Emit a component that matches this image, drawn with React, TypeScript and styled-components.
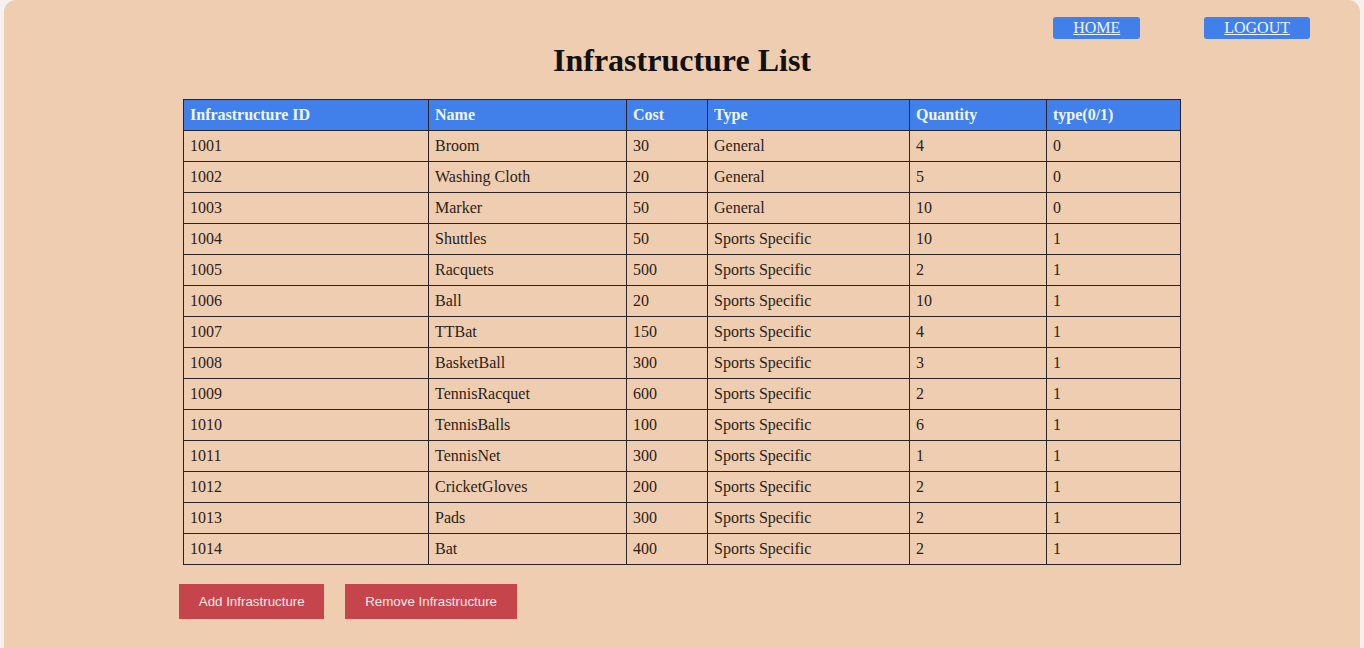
import React from 'react';
import styled, { createGlobalStyle } from 'styled-components';

const GlobalStyle = createGlobalStyle`
  html, body {
    margin: 0;
    padding: 0;
    background: #f6f1ee;
    overflow: hidden;
  }
  body {
    font-family: "Liberation Serif", "Times New Roman", serif;
  }
`;

const Panel = styled.div`
  margin: 0 4px;
  min-height: 670px;
  background-color: #efcdb0;
  border-radius: 12px;
  padding-top: 17px;
  box-sizing: border-box;
`;

const Nav = styled.nav`
  display: flex;
  justify-content: flex-end;
  gap: 64px;
  padding-right: 50px;
`;

const NavLink = styled.a`
  display: block;
  padding: 2px 20px;
  line-height: 18px;
  font-size: 16px;
  color: #eef4ff;
  text-decoration: underline;
  background-color: #4180ea;
  border-radius: 3px;
  cursor: pointer;
`;

const Title = styled.h1`
  margin: 3px 0 21px;
  font-size: 32px;
  line-height: 36px;
  font-weight: 700;
  text-align: center;
  color: #111;
`;

const Content = styled.div`
  width: 998px;
  margin: 0 auto;
`;

const Table = styled.table`
  width: 998px;
  table-layout: fixed;
  border-collapse: collapse;
  font-size: 16px;
`;

const Th = styled.th`
  background-color: #4180ea;
  color: #f1f6ff;
  text-align: left;
  font-weight: 700;
  padding: 6px;
  line-height: 18px;
  border: 1px solid #2a2326;
`;

const Td = styled.td`
  color: #2b1d18;
  padding: 6px;
  line-height: 18px;
  border: 1px solid #2a2326;
`;

const Actions = styled.div`
  display: flex;
  gap: 21px;
  margin: 19px 0 0 -4px;
`;

const ActionButton = styled.button`
  background-color: #c6454d;
  color: #f7e9e9;
  border: none;
  padding: 10px 19.75px;
  line-height: 15px;
  font-size: 13.333px;
  font-family: "Liberation Sans", Arial, sans-serif;
  cursor: pointer;
`;

interface Item {
  id: number;
  name: string;
  cost: number;
  type: string;
  quantity: number;
  flag: number;
}

const columns = [
  { label: 'Infrastructure ID', width: 245 },
  { label: 'Name', width: 198 },
  { label: 'Cost', width: 81 },
  { label: 'Type', width: 202 },
  { label: 'Quantity', width: 137 },
  { label: 'type(0/1)', width: 134 },
];

const items: Item[] = [
  { id: 1001, name: 'Broom', cost: 30, type: 'General', quantity: 4, flag: 0 },
  { id: 1002, name: 'Washing Cloth', cost: 20, type: 'General', quantity: 5, flag: 0 },
  { id: 1003, name: 'Marker', cost: 50, type: 'General', quantity: 10, flag: 0 },
  { id: 1004, name: 'Shuttles', cost: 50, type: 'Sports Specific', quantity: 10, flag: 1 },
  { id: 1005, name: 'Racquets', cost: 500, type: 'Sports Specific', quantity: 2, flag: 1 },
  { id: 1006, name: 'Ball', cost: 20, type: 'Sports Specific', quantity: 10, flag: 1 },
  { id: 1007, name: 'TTBat', cost: 150, type: 'Sports Specific', quantity: 4, flag: 1 },
  { id: 1008, name: 'BasketBall', cost: 300, type: 'Sports Specific', quantity: 3, flag: 1 },
  { id: 1009, name: 'TennisRacquet', cost: 600, type: 'Sports Specific', quantity: 2, flag: 1 },
  { id: 1010, name: 'TennisBalls', cost: 100, type: 'Sports Specific', quantity: 6, flag: 1 },
  { id: 1011, name: 'TennisNet', cost: 300, type: 'Sports Specific', quantity: 1, flag: 1 },
  { id: 1012, name: 'CricketGloves', cost: 200, type: 'Sports Specific', quantity: 2, flag: 1 },
  { id: 1013, name: 'Pads', cost: 300, type: 'Sports Specific', quantity: 2, flag: 1 },
  { id: 1014, name: 'Bat', cost: 400, type: 'Sports Specific', quantity: 2, flag: 1 },
];

export default function App() {
  return (
    <>
      <GlobalStyle />
      <Panel>
        <Nav>
          <NavLink>HOME</NavLink>
          <NavLink>LOGOUT</NavLink>
        </Nav>
        <Title>Infrastructure List</Title>
        <Content>
          <Table>
            <colgroup>
              {columns.map((c) => (
                <col key={c.label} style={{ width: c.width }} />
              ))}
            </colgroup>
            <thead>
              <tr>
                {columns.map((c) => (
                  <Th key={c.label}>{c.label}</Th>
                ))}
              </tr>
            </thead>
            <tbody>
              {items.map((item) => (
                <tr key={item.id}>
                  <Td>{item.id}</Td>
                  <Td>{item.name}</Td>
                  <Td>{item.cost}</Td>
                  <Td>{item.type}</Td>
                  <Td>{item.quantity}</Td>
                  <Td>{item.flag}</Td>
                </tr>
              ))}
            </tbody>
          </Table>
          <Actions>
            <ActionButton>Add Infrastructure</ActionButton>
            <ActionButton>Remove Infrastructure</ActionButton>
          </Actions>
        </Content>
      </Panel>
    </>
  );
}
